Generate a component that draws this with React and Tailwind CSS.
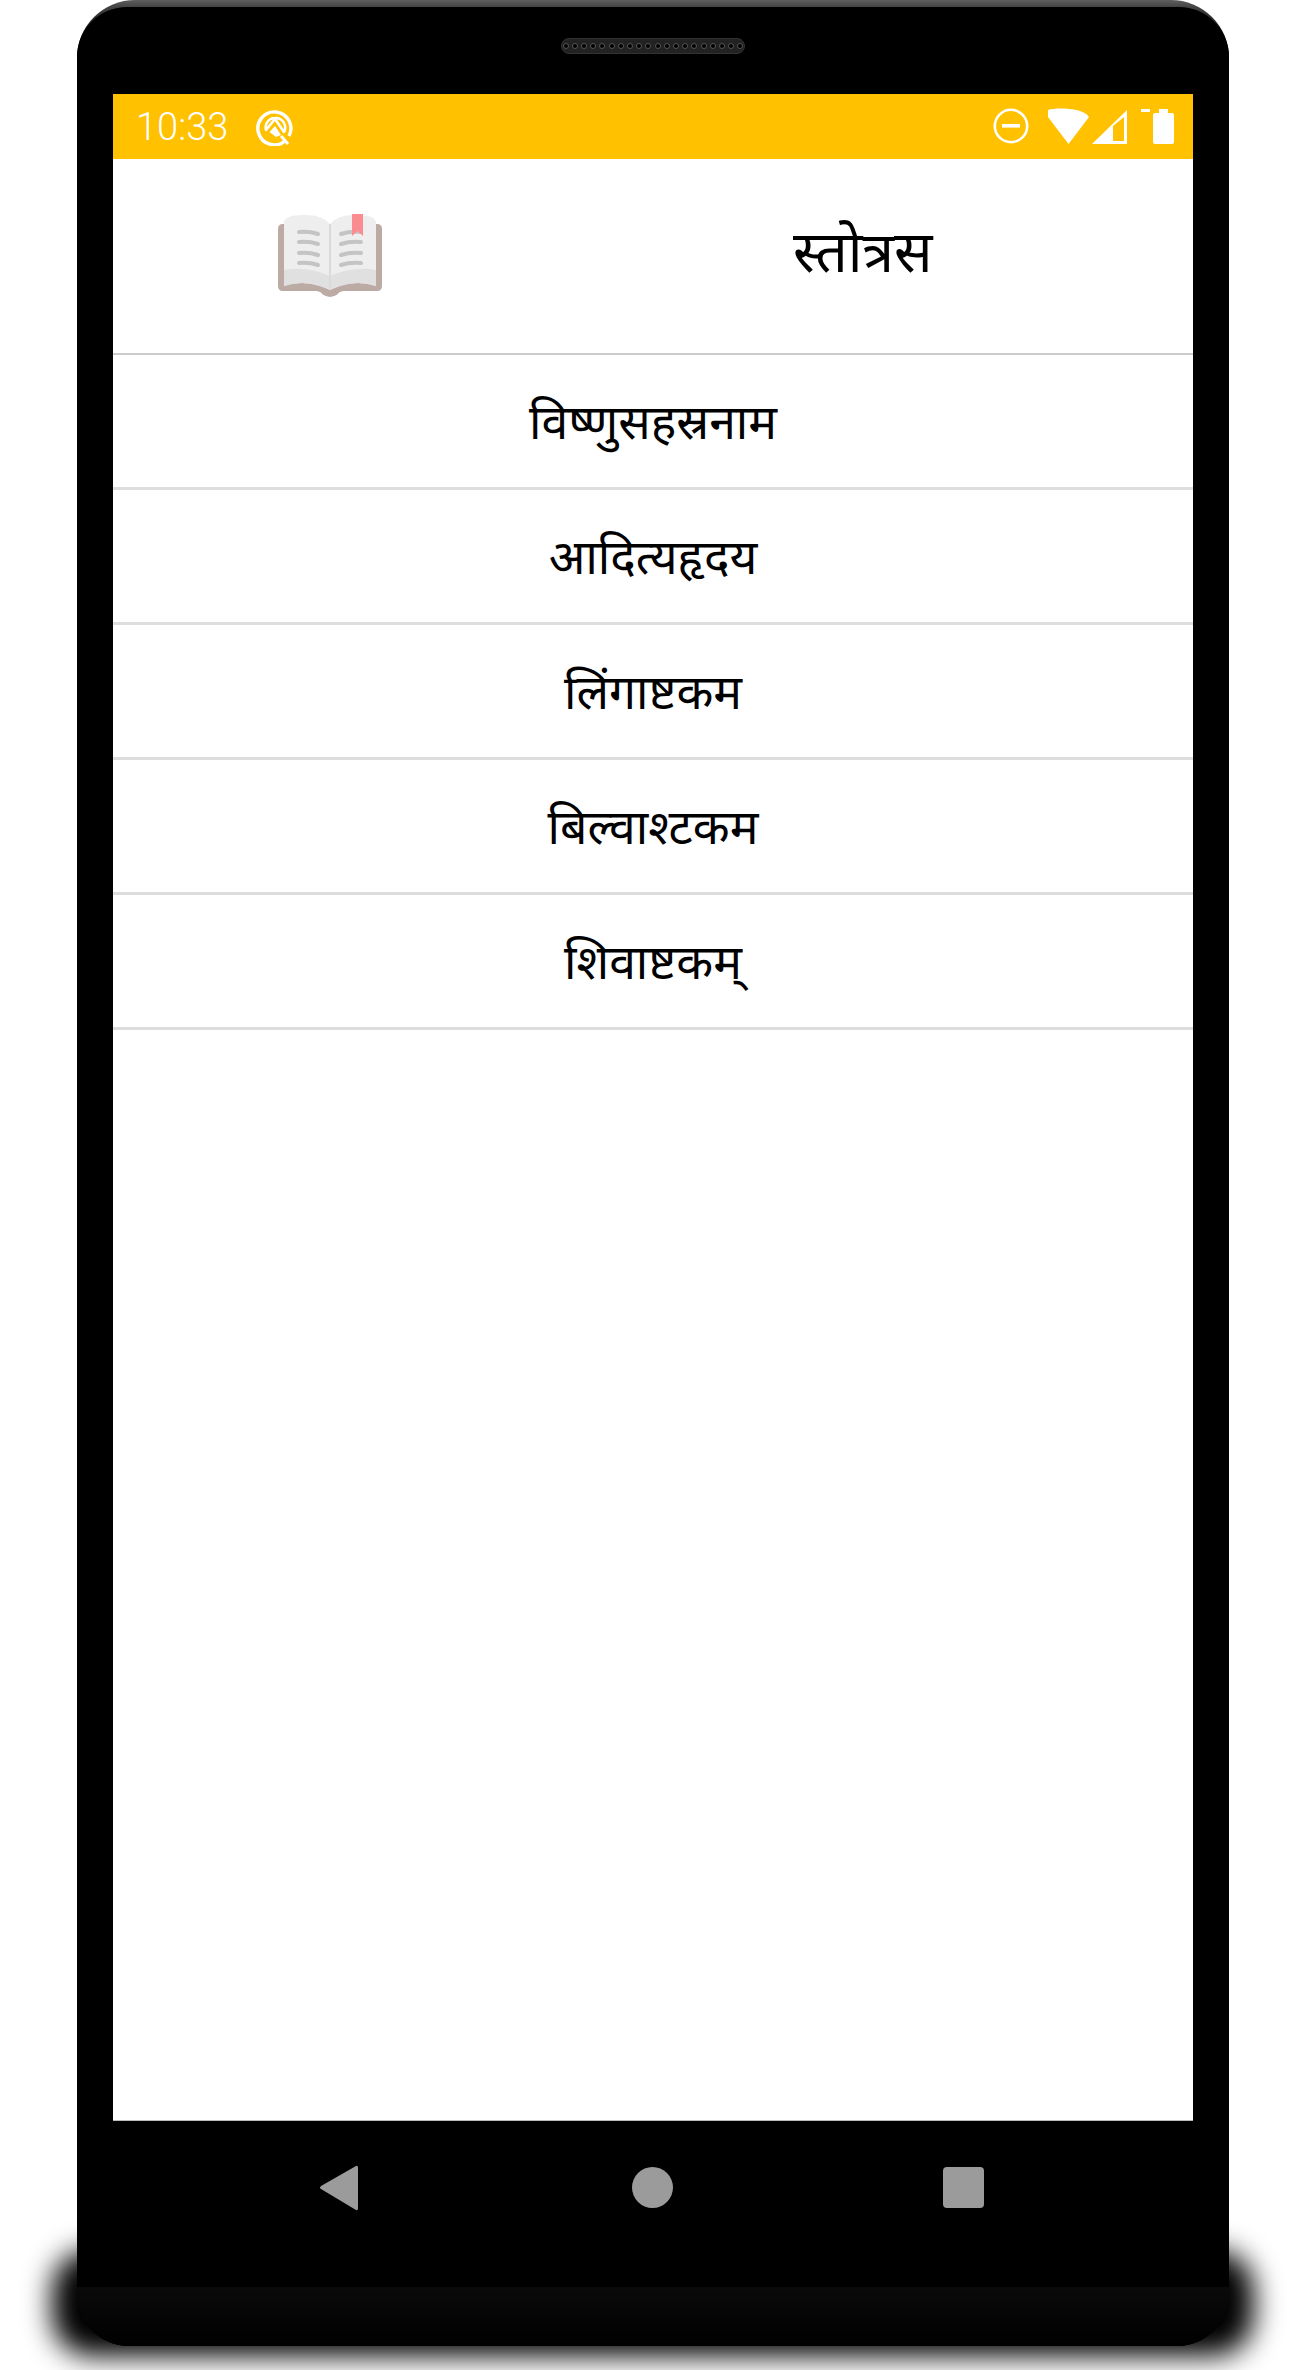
import React from 'react';

const stotras = ['विष्णुसहस्रनाम', 'आदित्यहृदय', 'लिंगाष्टकम', 'बिल्वाश्टकम', 'शिवाष्टकम्'];

const QIcon = () => (
    <svg width="38" height="38" viewBox="0 0 38 38" fill="none">
        <path d="M29 33 A16.5 16.5 0 1 1 33 28" stroke="white" strokeWidth="3.4" strokeLinecap="butt" />
        <path d="M19 10 A9.5 9.5 0 0 1 28 24 L19 11 L10 22 A9.5 9.5 0 0 1 19 10 Z" stroke="white" strokeWidth="2.6" strokeLinejoin="round" />
        <path d="M13.5 24 L19 18 L25 27 L20 29 Z" fill="white" />
        <path d="M25 28 L32 36" stroke="white" strokeWidth="3" />
    </svg>
);

const StatusIcons = () => (
    <svg width="160" height="37" viewBox="0 0 160 37" fill="none">
        <circle cx="18" cy="18" r="16.2" stroke="white" strokeWidth="2.6" />
        <rect x="9" y="16" width="18" height="3.6" fill="white" />
        <path d="M55 2 C63 -0.5 90 -0.5 96 9 L75.5 36 L55 9 Z" fill="white" transform="translate(0 0)" />
        <path fillRule="evenodd" clipRule="evenodd" d="M99 36 L134 2 L134 36 Z M120 18 L120 33 L131 33 L131 9 Z" fill="white" />
        <path d="M154 1 H163 V4 H154 Z" fill="white" transform="translate(-6 0)" />
        <rect x="137" y="3" width="0" height="0" />
    </svg>
);

// open book, same look as the emoji in the header
const BookIcon = () => (
    <svg width="104" height="84" viewBox="0 0 104 84">
        <path d="M5 10 H99 Q104 10 104 15 V72 Q104 77 99 77 H66 Q60 78 60 80 Q52 86 44 80 Q44 78 38 77 H5 Q0 77 0 72 V15 Q0 10 5 10 Z" fill="#bcaaa4" />
        <path d="M6 8 Q8 1 24 1 Q44 0 52 10 Q60 0 80 1 Q96 1 98 8 V72 Q80 66 62 72 Q56 74 52 76 Q48 74 42 72 Q24 66 6 72 Z" fill="#eeeeee" />
        <path d="M6 56 V72 Q24 66 42 72 Q48 74 52 76 Q56 74 62 72 Q80 66 98 72 V56 Q76 52 52 62 Q28 52 6 56 Z" fill="#e0e0e0" />
        <path d="M52 10 V76" stroke="#dadada" strokeWidth="2" />
        <g stroke="#c4c4c4" strokeWidth="4" strokeLinecap="round" fill="none">
            <path d="M21 18 Q31 17 40 20" />
            <path d="M21 28 Q31 27 40 30" />
            <path d="M21 39 Q31 38 40 41" />
            <path d="M21 49 Q31 48 40 51" />
            <path d="M63 20 Q72 17 83 18" />
            <path d="M63 30 Q72 27 83 28" />
            <path d="M63 41 Q72 38 83 39" />
            <path d="M63 51 Q72 48 83 49" />
        </g>
        <path d="M74 0 H85 V22 L79.500 17 L74 22 Z" fill="#f98b91" />
    </svg>
);

const Speaker = () => (
    <div className="flex items-center justify-center gap-[3.2px] w-[184px] h-[16px] rounded-full bg-[#222222] border border-[#333333] mx-auto">
        {Array.from({ length: 20 }).map((_, i) => (
            <span key={i} className="w-[6px] h-[6px] rounded-full bg-black border border-[#555555]" />
        ))}
    </div>
);

const App = () => {
    return (
        <div className="relative w-[1305px] h-[2370px] bg-white overflow-hidden font-['Noto_Sans','Noto_Sans_Devanagari',sans-serif]">
            {/* soft shadow under the phone */}
            <div className="absolute left-[52px] top-[2250px] w-[1202px] h-[106px] rounded-[40px] bg-black blur-[14px]" />

            <div className="relative ml-[77px] w-[1152px] h-[2346px] rounded-t-[58px] rounded-b-[52px] bg-[linear-gradient(#5e5e5e_0px,#444444_7px,#000000_40px)]">
                <div className="mt-0 h-full pt-[7px]">
                    <div className="h-full rounded-t-[50px] rounded-b-[52px] bg-black flex flex-col overflow-hidden">
                        <div className="h-[87px] pt-[31px]">
                            <Speaker />
                        </div>

                        <div className="mx-[36px] w-[1080px] h-[2027px] bg-white flex flex-col border-b border-[#bbbbbb]">
                            {/* status bar */}
                            <div className="h-[65px] bg-[#ffc100] flex items-center justify-between pl-[23px] pr-[19px] text-white">
                                <div className="flex items-center gap-[28px]">
                                    <span className="font-['Roboto'] font-light text-[38px] leading-none">10:33</span>
                                    <QIcon />
                                </div>
                                <div className="flex items-center gap-[2px]">
                                    <StatusIcons />
                                    <div className="flex flex-col items-center ml-[-2px]">
                                        <div className="w-[9px] h-[4px] bg-white" />
                                        <div className="w-[21px] h-[31px] bg-white rounded-[2px]" />
                                    </div>
                                </div>
                            </div>

                            {/* header */}
                            <div className="h-[196px] flex items-center pl-[165px] border-b-2 border-[#cccccc]">
                                <BookIcon />
                                <h1 className="ml-[411px] mb-[12px] text-[57px] leading-none font-normal text-black">स्तोत्रस</h1>
                            </div>

                            {/* list */}
                            {stotras.map(name => (
                                <div key={name} className="h-[135px] flex items-center justify-center border-b-[3px] border-[#dddddd]">
                                    <span className="text-[48px] leading-none text-black">{name}</span>
                                </div>
                            ))}
                        </div>

                        {/* nav bar */}
                        <div className="mx-[36px] w-[1080px] h-[166px] flex items-start pt-[45px] relative">
                            <svg className="absolute left-[206px] top-[44px]" width="40" height="46" viewBox="0 0 40 46">
                                <path d="M37 1 Q39 0 39 3 V43 Q39 46 37 45 L2 24 Q0 23 2 21 Z" fill="#9b9b9b" />
                            </svg>
                            <div className="absolute left-[519px] top-[46px] w-[41px] h-[41px] rounded-full bg-[#9b9b9b]" />
                            <div className="absolute left-[830px] top-[46px] w-[41px] h-[41px] rounded-[4px] bg-[#9b9b9b]" />
                        </div>

                        {/* lighter chin */}
                        <div className="flex-1 bg-[linear-gradient(#0a0a0a,#000000)]" />
                    </div>
                </div>
            </div>
        </div>
    );
};

export default App;
